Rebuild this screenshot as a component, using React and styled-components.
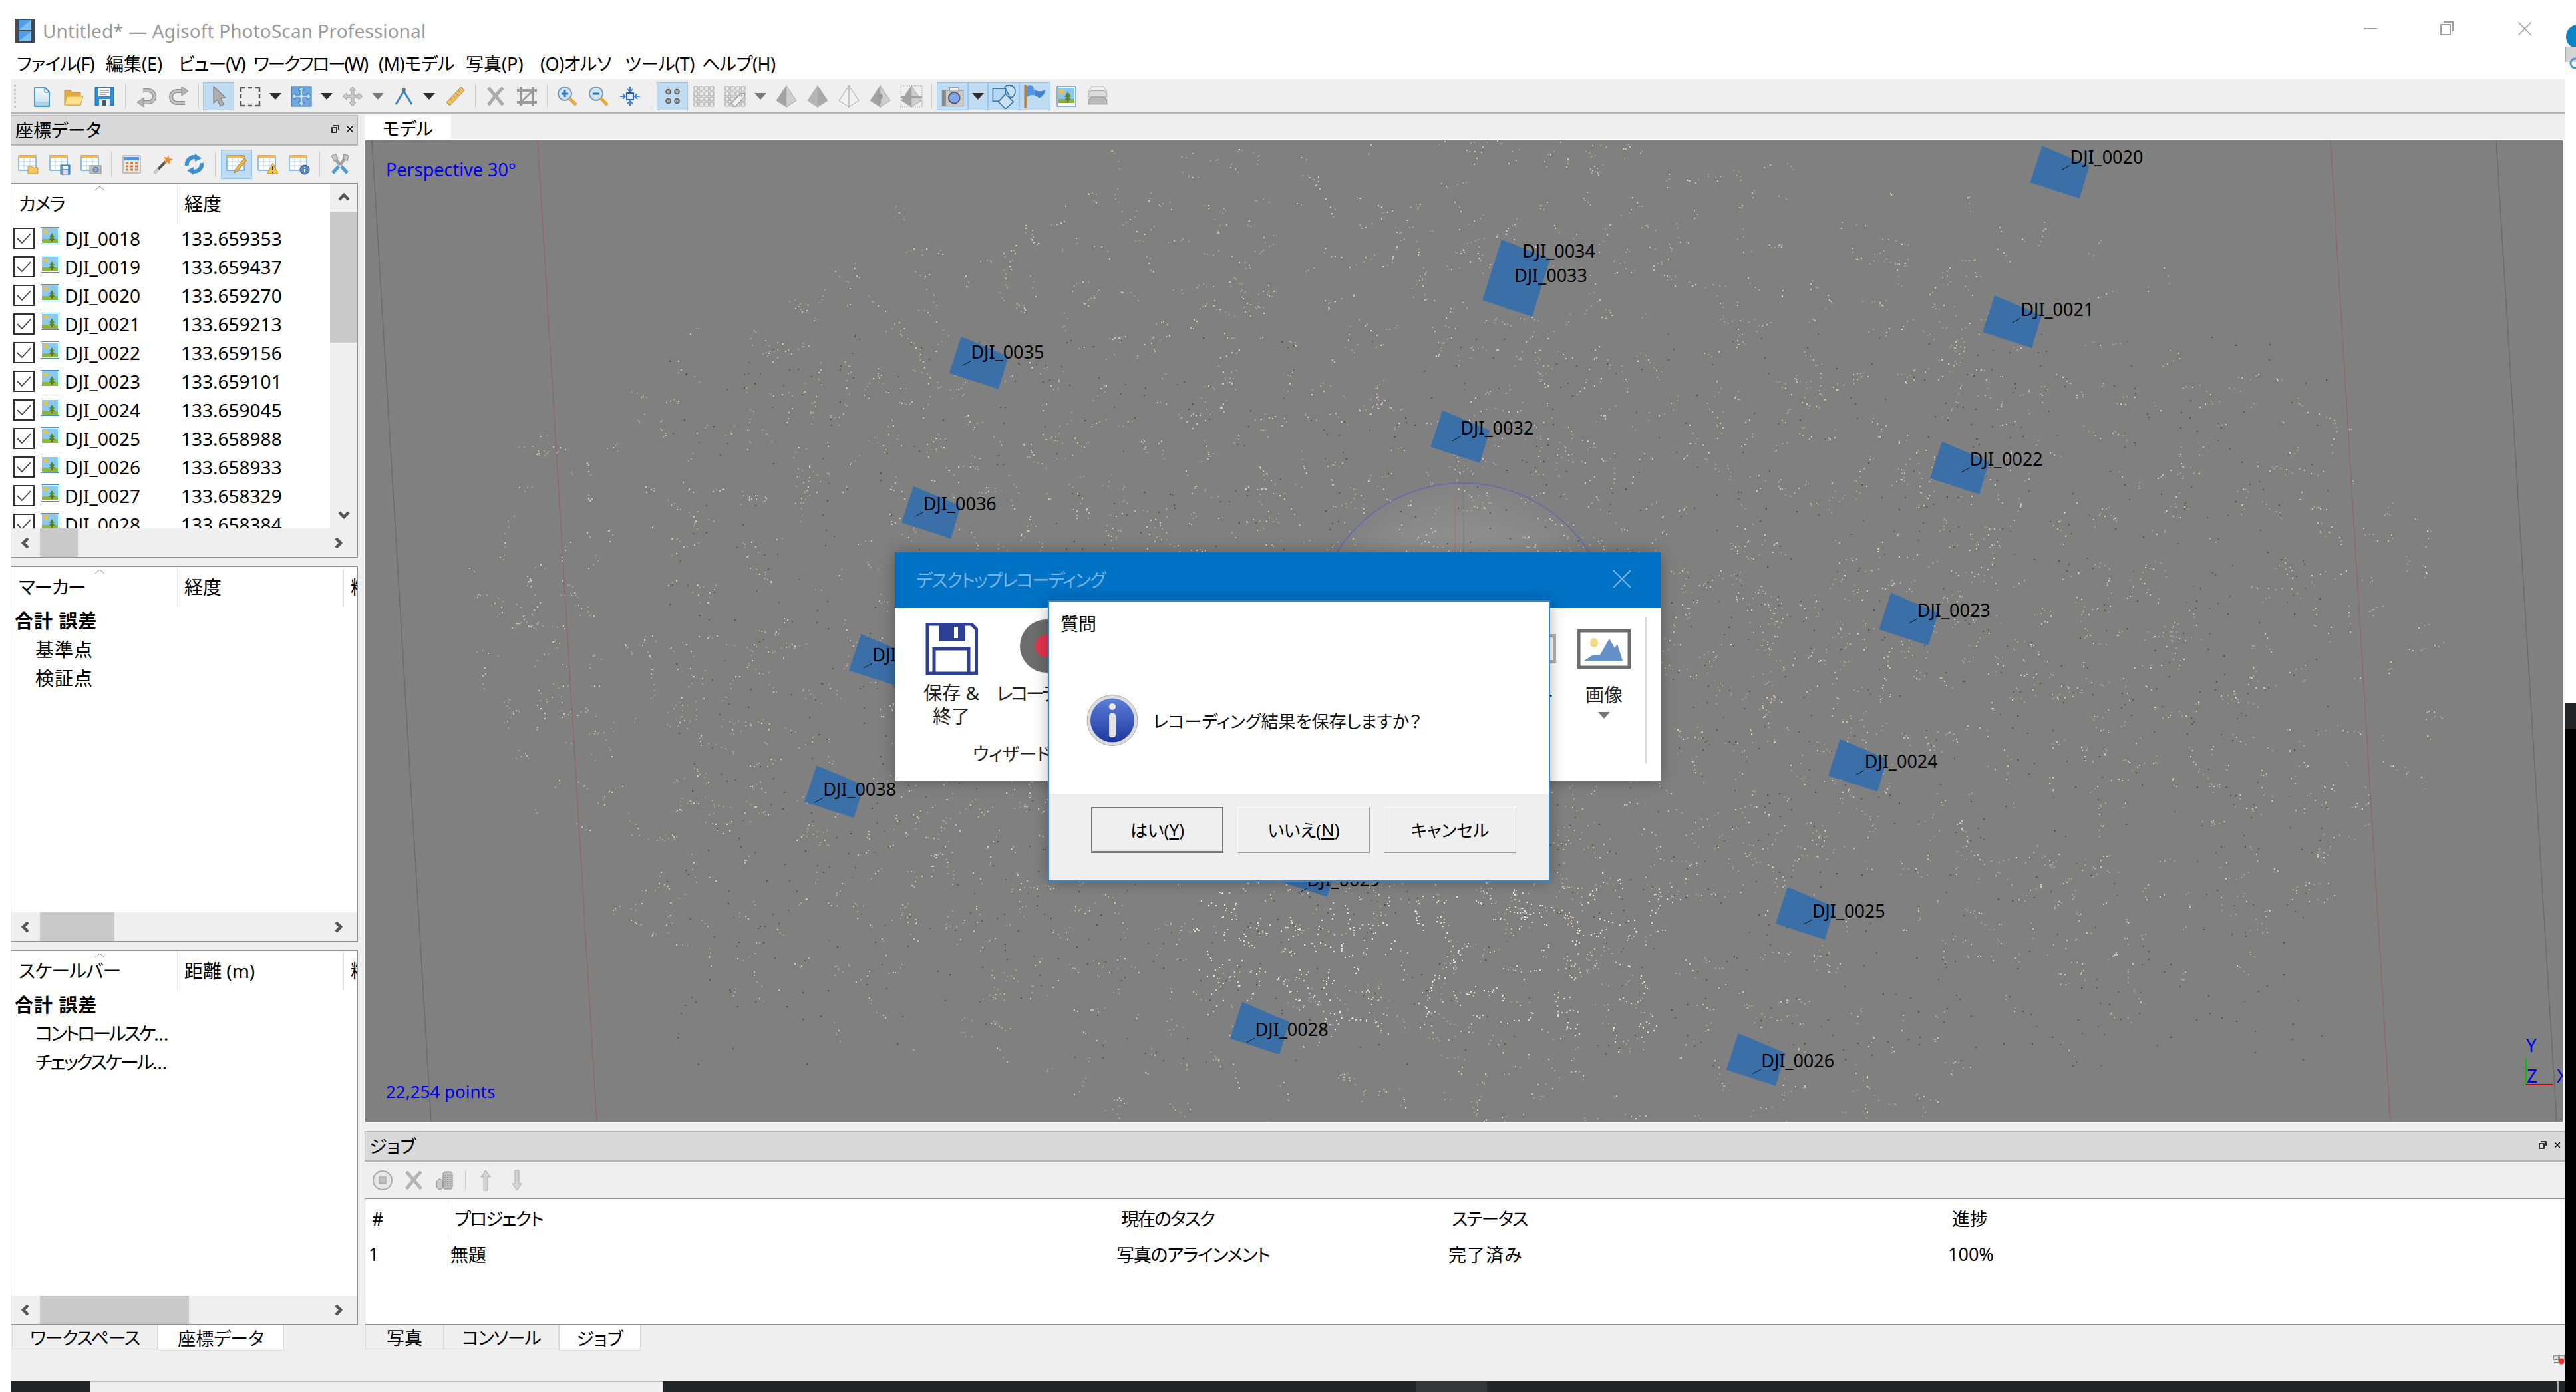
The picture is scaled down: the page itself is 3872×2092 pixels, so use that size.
import React from 'react';
import styled, { createGlobalStyle } from 'styled-components';

const FONT = `"Noto Sans", "Noto Sans CJK JP", sans-serif`;

const GlobalStyle = createGlobalStyle`
  html, body { margin: 0; padding: 0; background: #fff; }
  body { font-family: ${FONT}; font-size: 28px; color: #000; font-feature-settings: "palt"; }
  * { box-sizing: border-box; }
`;

const Page = styled.div`
  position: relative;
  width: 3872px;
  height: 2092px;
  overflow: hidden;
  display: flex;
  background: #fff;
`;
const AppWindow = styled.div`
  margin-left: 16px;
  width: 3840px;
  height: 100%;
  display: flex;
  flex-direction: column;
`;
const RightStrip = styled.div`
  flex: 1;
  display: flex;
  flex-direction: column;
  position: relative;
`;
const StripBand = styled.div`
  margin-top: 1056px;
  height: 40px;
  background: #212527;
`;
const StripBlack = styled.div`
  flex: 1;
  background: #000;
`;
const EdgeCircle = styled.div`
  position: absolute;
  left: 1px;
  top: 37px;
  width: 36px;
  height: 36px;
  border-radius: 50%;
  background: #0a84c6;
`;
const EdgeChip = styled.div`
  position: absolute;
  left: 0;
  top: 70px;
  width: 16px;
  height: 23px;
  background: #d4d4d4;
  border-left: 1px solid #aaa;
  padding: 3px 0 0 5px;
`;

/* title + menu */
const TitleBar = styled.div`
  height: 70px;
  display: flex;
  align-items: center;
  padding: 22px 0 0 6px;
  color: #999;
  font-size: 28px;
`;
const TitleText = styled.span`
  margin-left: 11px;
  white-space: nowrap;
  letter-spacing: 0.1px;
`;
const WinControls = styled.div`
  margin-left: auto;
  margin-top: -6px;
  display: flex;
  width: 303px;
`;
const WinBtn = styled.div`
  width: ${p => p.$w}px;
  height: 22px;
  display: flex;
`;
const MenuBar = styled.div`
  height: 48px;
  display: flex;
  align-items: center;
  padding-left: 9px;
  white-space: nowrap;
`;
const MenuItem = styled.div`
  width: ${p => p.$w}px;
  font-size: 27px;
  letter-spacing: ${p => p.$ls}px;
`;

/* toolbars */
const MainToolbar = styled.div`
  height: 53px;
  display: flex;
  align-items: stretch;
  padding: 3px 0 3px 0;
  background: #efefef;
  border-top: 2px solid #f4f4f4;
  border-bottom: 2px solid #b5b5b5;
`;
const Grip = styled.div`
  width: 18px;
  margin: 4px 0 4px 5px;
  border-left: 3px dotted #c4c4c4;
`;
const ToolBtn = styled.div`
  width: ${p => p.$w || 47}px;
  display: flex;
  align-items: center;
  justify-content: center;
  background: ${p => (p.$active ? '#c0dcf3' : 'transparent')};
  border: 1px solid ${p => (p.$active ? '#90c8f6' : 'transparent')};
`;
const Sep = styled.div`
  width: ${p => p.$w || 14}px;
  display: flex;
  justify-content: center;
  padding: 3px 0;
  &::after {
    content: '';
    width: 1px;
    background: #cfcfcf;
  }
`;
const Arrow = styled.div`
  width: 0;
  height: 0;
  margin-top: ${p => p.$mt || 0}px;
  border-left: 9px solid transparent;
  border-right: 9px solid transparent;
  border-top: 10px solid ${p => p.$c || '#2c2c2c'};
`;

const Main = styled.div`
  flex: 1;
  display: flex;
  background: #efefef;
  position: relative;
  padding-top: 2px;
`;
const LeftCol = styled.div`
  width: 522px;
  display: flex;
  flex-direction: column;
`;
const RightCol = styled.div`
  margin-left: 10px;
  flex: 1;
  min-width: 0;
  display: flex;
  flex-direction: column;
`;
const DockHeader = styled.div`
  height: 46px;
  flex: none;
  display: flex;
  align-items: center;
  justify-content: space-between;
  padding: 0 6px 3px;
  background: #d9d9d9;
  border: 1px solid #b4b4b4;
  border-width: 1px 1px 2px 1px;
  font-size: 27px;
`;
const DockIcons = styled.div`
  display: flex;
  gap: 11px;
  align-items: center;
`;
const PanelToolbar = styled.div`
  height: ${p => p.$h}px;
  flex: none;
  display: flex;
  padding: ${p => p.$pad}px 0 ${p => p.$pb}px 3px;
  align-items: stretch;
`;

/* tables */
const Table = styled.div`
  height: ${p => p.$h}px;
  flex: none;
  margin-bottom: ${p => p.$mb || 0}px;
  display: flex;
  flex-direction: column;
  background: #fff;
  border: 1px solid #8f8f98;
  border-bottom-width: ${p => p.$bb || 1}px;
  overflow: hidden;
`;
const TableBody = styled.div`
  flex: 1;
  min-height: 0;
  display: flex;
`;
const TableMain = styled.div`
  flex: 1;
  min-width: 0;
  overflow: hidden;
`;
const HeadRow = styled.div`
  height: 60px;
  display: flex;
  white-space: nowrap;
`;
const HeadCell = styled.div`
  position: relative;
  width: ${p => p.$w}px;
  flex: none;
  padding-left: ${p => p.$pl || 10}px;
  line-height: 60px;
  border-right: 1px solid #e6e6e6;
  overflow: hidden;
  font-size: 28px;
  letter-spacing: ${p => p.$ls || 0}px;
`;
const SortMark = styled.svg`
  position: absolute;
  left: 125px;
  top: 3px;
`;
const CamRow = styled.div`
  height: 43px;
  display: flex;
  align-items: center;
  padding-left: 3px;
  white-space: nowrap;
`;
const CheckBox = styled.div`
  width: 32px;
  height: 32px;
  flex: none;
  border: 2px solid #333;
  display: flex;
  align-items: center;
  justify-content: center;
`;
const ThumbWrap = styled.div`
  margin: -4px 0 0 9px;
  width: 28px;
  height: 30px;
  flex: none;
`;
const CamName = styled.span`
  margin-left: 8px;
  width: 175px;
`;
const TreeRow = styled.div`
  height: 43px;
  line-height: 43px;
  padding-left: ${p => (p.$sub ? 36 : 5)}px;
  font-weight: ${p => (p.$bold ? 700 : 400)};
  white-space: nowrap;
  font-size: 28px;
  letter-spacing: ${p => p.$ls || 0}px;
`;
const VScroll = styled.div`
  width: 41px;
  flex: none;
  display: flex;
  flex-direction: column;
  background: #efefef;
`;
const ScrollCap = styled.div`
  flex: none;
  width: 41px;
  height: 42px;
  margin-top: ${p => (p.$end ? 'auto' : 0)};
  display: flex;
  align-items: center;
  justify-content: center;
`;
const VThumb = styled.div`
  height: ${p => p.$h}px;
  width: 41px;
  flex: none;
  background: #c9c9c9;
`;
const HScroll = styled.div`
  height: 43px;
  flex: none;
  display: flex;
  background: #efefef;
`;
const HThumb = styled.div`
  width: ${p => p.$w}px;
  background: #c9c9c9;
`;
const HArrowCell = styled.div`
  width: 43px;
  flex: none;
  margin-left: ${p => (p.$end ? 'auto' : 0)};
  margin-right: ${p => p.$mr || 0}px;
  display: flex;
  align-items: center;
  justify-content: center;
`;

/* bottom tabs */
const TabRow = styled.div`
  height: ${p => p.$h || 37}px;
  flex: none;
  display: flex;
  padding-left: ${p => p.$pl || 0}px;
`;
const Tab = styled.div`
  width: ${p => p.$w}px;
  height: ${p => (p.$on ? 38 : 36)}px;
  display: flex;
  align-items: center;
  justify-content: center;
  background: ${p => (p.$on ? '#fff' : '#efefef')};
  border: 1px solid #d8d8d8;
  border-top: 0;
  white-space: nowrap;
  font-size: 27px;
  letter-spacing: ${p => p.$ls || 0}px;
`;
const TopTab = styled.div`
  width: 130px;
  height: 38px;
  display: flex;
  align-items: center;
  justify-content: center;
  background: #fff;
  font-size: 27px;
`;

/* 3D view */
const ViewFrame = styled.div`
  position: relative;
  height: 1475px;
  flex: none;
  margin: 0 4px 0 1px;
  background: #808080;
  overflow: hidden;
  outline: 2px solid #fff;
`;
const ViewSvg = styled.svg`
  display: block;
`;
const ViewLabel = styled.div`
  position: absolute;
  left: 31px;
  color: #0000f0;
  font-size: ${p => p.$fs}px;
  white-space: nowrap;
  top: ${p => p.$top}px;
`;
const JobWrap = styled.div`
  margin-top: 14px;
  display: flex;
  flex-direction: column;
  flex: 1;
`;
const JobHeadRow = styled.div`
  height: 60px;
  display: flex;
  align-items: center;
  white-space: nowrap;
  font-size: 27px;
`;
const JobRow = styled.div`
  height: 44px;
  display: flex;
  align-items: center;
  white-space: nowrap;
  font-size: 27px;
`;
const JobCell = styled.div`
  width: ${p => p.$w}px;
  flex: none;
  padding-left: ${p => p.$pl}px;
  letter-spacing: ${p => p.$ls || 0}px;
`;
const JobHeadCell = styled(JobCell)`
  height: 100%;
  line-height: 60px;
  border-right: ${p => (p.$line ? '1px solid #e6e6e6' : '0')};
`;

/* taskbar */
const TaskBar = styled.div`
  height: 16px;
  flex: none;
  display: flex;
  background: #212527;
`;
const TaskLight = styled.div`
  margin-left: 120px;
  width: 860px;
  background: #efefef;
  border-top: 1px solid #bdbdbd;
`;
const TaskActive = styled.div`
  margin-left: 1132px;
  width: 107px;
  background: #34383a;
`;
const TaskTick = styled.div`
  margin-left: 1608px;
  width: 4px;
  background: #aaa;
`;
const TrayIcon = styled.div`
  position: absolute;
  right: 1px;
  bottom: 16px;
`;

/* dialogs */
const BackDialog = styled.div`
  position: absolute;
  left: 1345px;
  top: 830px;
  width: 1151px;
  height: 344px;
  background: #fff;
  display: flex;
  flex-direction: column;
  box-shadow: 0 0 22px rgba(0, 0, 0, 0.3);
`;
const BackTitle = styled.div`
  height: 83px;
  flex: none;
  display: flex;
  align-items: center;
  justify-content: space-between;
  padding: 0 44px 3px 32px;
  background: #0072c6;
  color: #76b4e4;
  font-size: 27px;
  letter-spacing: -2px;
`;
const Ribbon = styled.div`
  flex: 1;
  display: flex;
  justify-content: space-between;
  padding: 15px 21px 27px 25px;
`;
const RibbonGroup = styled.div`
  display: flex;
  flex-direction: column;
`;
const RibbonItems = styled.div`
  display: flex;
  flex: 1;
  padding-top: 8px;
`;
const RibbonBtn = styled.div`
  width: ${p => p.$w}px;
  margin-right: ${p => p.$mr || 0}px;
  display: flex;
  flex-direction: column;
  align-items: center;
  text-align: center;
  font-size: 28px;
  line-height: 35px;
  white-space: nowrap;
  color: #222;
`;
const RibbonText = styled.div`
  margin-top: ${p => p.$mt || 5}px;
  letter-spacing: ${p => p.$ls || 0}px;
`;
const RecordWrap = styled.div`
  margin-top: -6px;
`;
const RibbonCaption = styled.div`
  padding-left: 92px;
  font-size: 27px;
  line-height: 28px;
  letter-spacing: -0.5px;
  color: #222;
`;
const RibbonRight = styled.div`
  display: flex;
  border-right: 2px solid #d8d8d8;
  padding: 18px 22px 0 0;
`;
const GreyFrame = styled.div`
  width: 78px;
  height: 44px;
  margin: 7px 0 8px;
  border: 5px solid #b4b4b4;
  background: #fff;
`;
const FrontDialog = styled.div`
  position: absolute;
  left: 1575px;
  top: 902px;
  width: 755px;
  height: 423px;
  display: flex;
  flex-direction: column;
  background: #fff;
  border: 2px solid #2a88d8;
  box-shadow: 0 0 22px rgba(0, 0, 0, 0.3);
`;
const DialogBody = styled.div`
  flex: 1;
  display: flex;
  flex-direction: column;
  padding: 14px 17px;
`;
const DialogHeading = styled.div`
  font-size: 27px;
  line-height: 40px;
`;
const DialogMessage = styled.div`
  margin-top: 85px;
  padding-left: 39px;
  display: flex;
  align-items: center;
  gap: 22px;
  font-size: 26px;
  color: #111;
`;
const DialogFooter = styled.div`
  height: 130px;
  flex: none;
  display: flex;
  gap: 21px;
  padding: 20px 49px 0 63px;
  background: #efefef;
`;
const DialogButton = styled.div`
  width: 199px;
  height: 69px;
  display: flex;
  align-items: center;
  justify-content: center;
  background: #efefef;
  border: 1px solid #fff;
  border-right-color: #9a9a9a;
  border-bottom: 2px solid #9a9a9a;
  font-size: 26px;
  ${p => p.$def && `
    border: 2px solid #777;
    border-bottom-width: 3px;
  `}
  u { text-underline-offset: 3px; }
`;

/* icons */
const Ico = ({ s = 32, w, h, children }) => (
  <svg width={w || s} height={h || s} viewBox="0 0 32 32">{children}</svg>
);
const Doc = () => <Ico><defs><linearGradient id="docg" x1="0" x2="0" y1="0" y2="1"><stop offset="0" stopColor="#f4fafd" /><stop offset="1" stopColor="#c4deec" /></linearGradient></defs><path d="M5 3h16l6 6v22H5z" fill="url(#docg)" stroke="#1f7fbf" strokeWidth="1.6" /><rect x="6" y="24" width="20" height="6" fill="#a9cfe2" /><path d="M20 3v7h7z" fill="#fff" stroke="#1f7fbf" strokeWidth="1" /></Ico>;
const Folder = () => <Ico><path d="M3 7h9l2 3h13v19H3z" fill="#e3ad45" stroke="#c08f2c" /><path d="M3 29l4-13h24l-4 13z" fill="#fde28b" stroke="#cfa33c" /></Ico>;
const Floppy = () => <Ico><path d="M2 2h28v28H2z" fill="#2f8fd6" stroke="#1f6aa8" /><rect x="7" y="3" width="18" height="13" fill="#f4f6f8" /><path d="M9 7h14M9 10h14M9 13h10" stroke="#667" strokeWidth="1" /><rect x="8" y="20" width="16" height="10" fill="#e6ecf2" /><rect x="13" y="22" width="6" height="8" fill="#45586a" /></Ico>;
const Undo = () => <Ico><path d="M10 7h8a9 9 0 0 1 0 18H9" fill="none" stroke="#8f8f8f" strokeWidth="6" /><path d="M10 7h8a9 9 0 0 1 0 18H9" fill="none" stroke="#c2c2c2" strokeWidth="3.500" /><path d="M11 18v14L1 25z" fill="#b4b4b4" stroke="#8f8f8f" /></Ico>;
const Redo = () => <Ico><path d="M22 8h-8a9 9 0 0 0 0 18h12" fill="none" stroke="#8f8f8f" strokeWidth="6" /><path d="M22 8h-8a9 9 0 0 0 0 18h12" fill="none" stroke="#c2c2c2" strokeWidth="3.500" /><path d="M21 1v14l10-7z" fill="#b4b4b4" stroke="#8f8f8f" /></Ico>;
const Cursor = () => <Ico><path d="M8 1l18 17-7 1 4 9-5 3-4-10-6 5z" fill="#adadad" stroke="#828282" strokeWidth="1.200" /></Ico>;
const DashRect = () => <Ico><path d="M2 9V3h7M13 3h6M23 3h7v6M30 13v6M30 23v7h-7M19 30h-6M9 30H2v-7M2 19v-6" fill="none" stroke="#555" strokeWidth="2.500" /></Ico>;
const Cross = ({ c = '#aaa', st = '#888' }) => <path d="M16 1l5 6h-3v7h7v-3l6 5-6 5v-3h-7v7h3l-5 6-5-6h3v-7H7v3l-6-5 6-5v3h7V7h-3z" fill={c} stroke={st} strokeWidth="1" />;
const MoveBlue = () => <Ico><rect x="1" y="1" width="30" height="30" fill="#6fa7dd" stroke="#2f6ea8" /><Cross c="#bcdcf4" st="#2f6ea8" /></Ico>;
const MoveGray = () => <Ico><Cross c="#c8c8c8" st="#a0a0a0" /></Ico>;
const Compass = () => <Ico><path d="M4 28L16 8l12 20" fill="none" stroke="#3d86c4" strokeWidth="3" /><circle cx="16" cy="6" r="3" fill="#777" /></Ico>;
const Ruler = () => <Ico><path d="M3 25L25 2l5 5L8 30z" fill="#edc068" stroke="#c08a2c" /><path d="M9 19l3 3M13 15l3 3M17 11l3 3M21 7l3 3" stroke="#a87a28" /></Ico>;
const XMark = ({ c = '#aaa' }) => <Ico><path d="M5 3c6 7 16 18 22 26M27 3C20 9 12 20 5 29" fill="none" stroke={c} strokeWidth="5" /></Ico>;
const Crop = () => <Ico><path d="M7 1v29M25 2v29M1 7h30M1 25h30" stroke="#999" strokeWidth="4" /><path d="M8 24L24 8" stroke="#999" strokeWidth="2.500" /></Ico>;
const Zoom = ({ minus }) => <Ico><circle cx="12" cy="12" r="10" fill="#cfe5f6" stroke="#8a9aa8" strokeWidth="2" /><path d="M19 19l10 10" stroke="#e8a93c" strokeWidth="5" /><path d="M7 12h10" stroke="#2a7ac0" strokeWidth="3" />{!minus && <path d="M12 7v10" stroke="#2a7ac0" strokeWidth="3" />}</Ico>;
const Fit = () => <Ico><rect x="11" y="11" width="10" height="10" fill="#d8e8f6" stroke="#2a5ea8" strokeWidth="2" /><path d="M16 1v8M12 5l4 4 4-4M16 31v-8M12 27l4-4 4 4M1 16h8M5 12l4 4-4 4M31 16h-8M27 12l-4 4 4 4" fill="none" stroke="#3d7fd0" strokeWidth="2" /></Ico>;
const Dots = () => <Ico>{[9.500, 22.500].map(x => [9, 23].map(y => <circle key={x + '-' + y} cx={x} cy={y} r="3.500" fill="#a4a4a4" stroke="#555" strokeWidth="1.500" />))}</Ico>;
const gridPos = [4, 12, 20, 28];
const SmallGrid = () => gridPos.map(x => gridPos.map(y => <rect key={x + '-' + y} x={x - 3} y={y - 3} width="6" height="6" rx="0.500" fill="#e8e8e8" stroke="#a8a8a8" strokeWidth="1.200" />));
const Grid = () => <Ico><SmallGrid /></Ico>;
const TagGrid = () => <Ico><SmallGrid /><path d="M10 27l14-15 6-1 0 6-14 15z" fill="#efefef" stroke="#a0a0a0" strokeWidth="1.400" /><circle cx="26" cy="15" r="1.500" fill="#a0a0a0" /></Ico>;
const Pyr = ({ v = 0 }) => (
  <Ico s={34}>
    <path d="M16 1L2 22l14 9z" fill={v === 2 ? '#f2f2f2' : v === 1 ? '#b6b6b6' : '#a2a2a2'} stroke="#b0b0b0" />
    <path d="M16 1l14 21-14 9z" fill={v === 2 ? '#f2f2f2' : v === 1 ? '#a8a8a8' : '#cfcfcf'} stroke="#b0b0b0" />
    {v === 3 && <path d="M16 12c4 0 5 7 1 8v6h-2v-6c-4-1-3-8 1-8z" fill="#9a9a9a" />}
    {v === 4 && <><rect x="1" y="1" width="30" height="30" fill="none" stroke="#888" strokeDasharray="1 2" /><path d="M1 17h30" stroke="#a0a0a0" strokeWidth="3" /></>}
  </Ico>
);
const Camera = () => <Ico s={36}><rect x="2" y="8" width="28" height="21" fill="#c8c8c8" stroke="#888" /><rect x="2" y="8" width="5" height="21" fill="#8a8a8a" /><rect x="12" y="4" width="12" height="5" fill="#eee" stroke="#999" /><circle cx="18" cy="18" r="7.500" fill="#7ea6ee" stroke="#555" strokeWidth="1.500" /></Ico>;
const Shapes = () => <Ico s={38}><path d="M17 4a8 8 0 0 1 12 1c3 6 0 12-5 13z" fill="#c9e2f5" stroke="#2a6ea8" strokeWidth="1.300" /><rect x="2" y="6" width="16" height="16" fill="#b8d6f0" stroke="#2a6ea8" strokeWidth="1.300" /><path d="M18 13l10 10-10 9-9-9z" fill="#c9e2f5" stroke="#2a6ea8" strokeWidth="1.300" /></Ico>;
const Flag = () => <Ico s={38}><rect x="2" y="1" width="3" height="30" fill="#b9803c" /><path d="M5 3c5-2 8-1 9 2l2 10c-3-1-7-1-11 2z" fill="#4e94e0" /><path d="M15 8c5 2 9 2 14 0-1 5-4 9-8 10l-5-3z" fill="#4283d0" /></Ico>;
const Picture = () => <Ico><rect x="2" y="1" width="28" height="30" fill="#fff" stroke="#2a6ea8" strokeWidth="1" /><rect x="4" y="3" width="24" height="18" fill="#8ac6ee" /><rect x="4" y="20" width="24" height="6" fill="#86b03c" /><circle cx="9" cy="9" r="3.500" fill="#f6c22e" /><path d="M18 9l5 8h-3l3 5h-10l3-5h-3z" fill="#5a8a2c" /><rect x="17" y="20" width="2" height="5" fill="#8a5a2c" /></Ico>;
const Layers = () => <Ico s={34}><path d="M8 2h16l5 7H3z" fill="#f2f2f2" stroke="#bbb" /><path d="M3 12l4-4h18l4 4v5H3z" fill="#ddd" stroke="#aaa" /><path d="M3 21l4-4h18l4 4v6H3z" fill="#bbb" stroke="#999" /></Ico>;

const TableGlyph = () => <g><rect x="1" y="3" width="26" height="22" fill="#fff" stroke="#2a86c8" /><rect x="1" y="3" width="26" height="4" fill="#edb95c" /><path d="M9 7v18M18 7v18M1 12h26M1 18h26" stroke="#a8cce6" strokeWidth="1" /></g>;
const TFolder = () => <Ico><TableGlyph /><path d="M15 19h6l2 2h7v9H15z" fill="#f2c766" stroke="#c99a2e" /></Ico>;
const TFloppy = () => <Ico><TableGlyph /><rect x="17" y="17" width="14" height="14" fill="#5a9ad0" stroke="#2a6ea8" /><rect x="20" y="18" width="8" height="5" fill="#fff" /><rect x="20" y="25" width="8" height="6" fill="#dde" /></Ico>;
const TCamera = () => <Ico><TableGlyph /><rect x="14" y="18" width="17" height="12" fill="#bbb" stroke="#888" /><circle cx="23" cy="24" r="4" fill="#7ea6ee" stroke="#666" /></Ico>;
const TPencil = () => <Ico><TableGlyph /><path d="M12 29l2-6L27 7l4 3-14 16z" fill="#efb64e" stroke="#b07a20" /></Ico>;
const TWarn = () => <Ico><TableGlyph /><path d="M23 14l8 16H15z" fill="#fbc93e" stroke="#b88a18" /><path d="M23 19v6M23 27v2" stroke="#333" strokeWidth="2" /></Ico>;
const TInfo = () => <Ico><TableGlyph /><circle cx="24" cy="24" r="7" fill="#5b86c8" stroke="#2a4e90" /><path d="M24 20v1M24 23v5" stroke="#fff" strokeWidth="2" /></Ico>;
const Calc = () => <Ico><rect x="3" y="3" width="26" height="26" fill="#e8e8e8" stroke="#999" /><rect x="5" y="5" width="22" height="5" fill="#5a8fd6" /><path d="M7 14h4M14 14h4M21 14h4M7 19h4M14 19h4M21 19h4M7 24h4M14 24h4M21 24h4" stroke="#d97a30" strokeWidth="3" /></Ico>;
const Wand = () => <Ico><path d="M3 29L20 12" stroke="#555" strokeWidth="4" /><path d="M3 29l6-6" stroke="#ccc" strokeWidth="4" /><path d="M24 1l1 6 6 1-5 3 1 6-4-4-5 2 2-6-3-4 6 1z" fill="#f08a20" /></Ico>;
const Refresh = () => <Ico><path d="M5 18a11 11 0 0 1 15-12" fill="none" stroke="#3d8fd0" strokeWidth="6" /><path d="M27 14a11 11 0 0 1-15 12" fill="none" stroke="#3d8fd0" strokeWidth="6" /><path d="M17 0l10 7-10 5zM15 32L5 25l10-5z" fill="#3d8fd0" /></Ico>;
const Tools = () => <Ico><path d="M16 17l9-12M16 17L7 5" stroke="#a4a4a4" strokeWidth="5" /><path d="M3 3l7-2 3 6-6 4zM22 1l7 2-2 8-6-4z" fill="#c8c8c8" stroke="#8a8a8a" /><path d="M5 29l9-10M27 29l-9-10" stroke="#4a98d8" strokeWidth="5" /></Ico>;
const Thumb = () => <svg width="28" height="30" viewBox="0 0 28 30"><rect x="0.500" y="0.500" width="27" height="25" fill="#fff" stroke="#4a90c8" /><rect x="2" y="2" width="24" height="17" fill="#8ccaf0" /><rect x="2" y="18" width="24" height="6" fill="#8ab83c" /><circle cx="8" cy="7" r="3" fill="#f6c22e" /><path d="M17 9l4 6h-2.500l3 4h-9l3-4H13z" fill="#4a8a2c" /><rect x="16" y="18" width="2" height="4" fill="#8a5a2c" /></svg>;
const Tick = () => <svg width="24" height="20" viewBox="0 0 24 20"><path d="M2 10l7 7L22 3" fill="none" stroke="#444" strokeWidth="1.800" /></svg>;
const Chevron = ({ dir, c = '#555', s = 18 }) => {
  const d = { up: 'M2 12L9 5l7 7', down: 'M2 6l7 7 7-7', left: 'M12 2L5 9l7 7', right: 'M6 2l7 7-7 7' }[dir];
  return <svg width={s} height={s} viewBox="0 0 18 18"><path d={d} fill="none" stroke={c} strokeWidth="4.500" /></svg>;
};
const Sort = () => <SortMark width="16" height="8" viewBox="0 0 16 8"><path d="M1 7l7-6 7 6" fill="none" stroke="#888" strokeWidth="1" /></SortMark>;
const DockFloat = () => <svg width="12" height="12" viewBox="0 0 12 12"><path d="M3 1h8v6M1 4h7v7H1z" fill="none" stroke="#000" strokeWidth="1.600" /></svg>;
const DockClose = () => <svg width="10" height="10" viewBox="0 0 10 10"><path d="M1 1l8 8M9 1l-8 8" stroke="#000" strokeWidth="1.600" /></svg>;
const LogoFilm = () => <svg width="31" height="36" viewBox="0 0 31 36"><rect width="31" height="36" rx="1" fill="#4a4a4a" /><rect x="6" y="2" width="19" height="15" fill="#4e9fe8" /><rect x="6" y="19" width="19" height="15" fill="#4e9fe8" /><path d="M6 17L25 2v15zM6 34l19-15v15z" fill="#7cc0f4" /></svg>;
const InfoIcon = () => <svg width="78" height="79" viewBox="0 0 78 79"><defs><linearGradient id="ib" x1="0" x2="0" y1="0" y2="1"><stop offset="0" stopColor="#5a7fd8" /><stop offset="1" stopColor="#2038a0" /></linearGradient></defs><circle cx="39" cy="39.500" r="38" fill="#ddd" stroke="#aaa" /><circle cx="39" cy="39.500" r="33" fill="url(#ib)" /><circle cx="39" cy="19" r="5" fill="#eee" /><rect x="34" y="29" width="10" height="36" rx="4" fill="#e4e4e4" /></svg>;
const SaveLarge = () => <svg width="80" height="80" viewBox="0 0 80 80"><path d="M4 2h66l8 8v66H4z" fill="#fff" stroke="#2e3f96" strokeWidth="5" /><rect x="21" y="3" width="40" height="25" fill="#2e3f96" /><rect x="44" y="6" width="6" height="17" fill="#fff" /><path d="M14 74V39h52v35" fill="none" stroke="#2e3f96" strokeWidth="5" /></svg>;
const RecordLarge = () => <svg width="82" height="82" viewBox="0 0 82 82"><circle cx="41" cy="41" r="40" fill="#6d6d6d" /><circle cx="41" cy="41" r="17" fill="#e8344e" /></svg>;
const ImageLarge = () => <svg width="80" height="59" viewBox="0 0 80 59"><rect x="2" y="2" width="76" height="55" fill="#fff" stroke="#6d6d6d" strokeWidth="5" /><ellipse cx="25" cy="20" rx="6" ry="7" fill="#f0dc80" /><path d="M10 47l14-9 10 0 14-24 8 14 4-6 8 25z" fill="#6690c8" /></svg>;
const Tray = () => <svg width="17" height="15" viewBox="0 0 17 15"><rect x="0.500" y="0.500" width="7" height="6" fill="#ddd" stroke="#888" /><rect x="9.500" y="0.500" width="7" height="6" fill="#ddd" stroke="#888" /><path d="M1 11h8" stroke="#777" strokeWidth="2" /><circle cx="12" cy="9" r="4.500" fill="#e8342a" /></svg>;
const StopIco = () => <Ico><circle cx="16" cy="16" r="14" fill="#e6e6e6" stroke="#aaa" strokeWidth="2" /><rect x="11" y="11" width="10" height="10" fill="#c0c0c0" stroke="#999" /></Ico>;
const Drum = () => <Ico><ellipse cx="8" cy="22" rx="5" ry="8" fill="#ccc" stroke="#888" /><rect x="13" y="3" width="14" height="26" rx="3" fill="#bdbdbd" stroke="#888" /><path d="M16 8v18M20 8v18M24 8v18" stroke="#999" strokeDasharray="1 2" strokeWidth="2" /></Ico>;
const UpDown = ({ down }) => <Ico><g transform={down ? 'rotate(180 16 16)' : 'rotate(0)'}><path d="M16 1l7 10h-4v20h-6V11H9z" fill="#d4d4d4" stroke="#aaa" /></g></Ico>;

/* viewport drawing */
const S = 3872 / 1568;
const CAMS = [
  ['DJI_0020', 1254, 105, 1260, 95],
  ['DJI_0021', 1225, 196, 1230, 188],
  ['DJI_0022', 1193, 285, 1199, 279],
  ['DJI_0023', 1162, 377, 1167, 371],
  ['DJI_0024', 1131, 466, 1135, 463],
  ['DJI_0025', 1099, 556, 1103, 554],
  ['DJI_0026', 1069, 645, 1072, 645],
  ['DJI_0028', 767, 626, 764, 626],
  ['DJI_0029', 796, 530, 795.5, 535],
  ['DJI_0032', 889, 266, 889, 260],
  ['DJI_0035', 596, 221, 591, 214],
  ['DJI_0036', 567, 312, 562, 306],
  ['DJI_0037', 535, 402, 531, 398],
  ['DJI_0038', 508, 482, 501, 480],
];
const VX = 549;
const VY = 210;

// scattered sparse cloud, short runs of dots rather than long strings
function makePoints() {
  let seed = 12345;
  const rnd = () => {
    seed = (seed * 1664525 + 1013904223) % 4294967296;
    return seed / 4294967296;
  };
  let light = '';
  let dim = '';
  let dark = '';
  let bright = '';
  const dot = (x, y, s) => `M${Math.round(x)} ${Math.round(y)}h${s}v${s}h-${s}z`;
  const run = (cx, cy, n, b) => {
    const a = rnd() * 6.28;
    let x = cx;
    let y = cy;
    for (let i = 0; i < n; i++) {
      x += Math.cos(a) * (2 + rnd() * 8) + (rnd() - 0.5) * 12;
      y += Math.sin(a) * (2 + rnd() * 8) + (rnd() - 0.5) * 12;
      const s = dot(x, y, 2);
      if (b) bright += s;
      else if (rnd() < 0.6) dim += s;
      else light += s;
    }
  };
  for (let i = 0; i < 4200; i++) {
    const x = 2197 + (rnd() * 2 - 1) * 1500;
    const y = 960 + (rnd() * 2 - 1) * 770;
    const d = ((x - 2197) / 1500) ** 2 + ((y - 960) / 770) ** 2;
    if (d > 1 || rnd() < d * 0.6) continue;
    run(x, y, 2 + Math.floor(rnd() * 4), false);
  }
  for (let i = 0; i < 130; i++) {
    run(1800 + rnd() * 700, 1340 + rnd() * 200, 4, true);
  }
  for (let i = 0; i < 1400; i++) {
    const x = 1000 + rnd() * 2500;
    const y = 500 + rnd() * 1100;
    dark += dot(x, y, 2);
  }
  return { light, dim, dark, bright };
}
const POINTS = makePoints();

const Viewport = () => (
  <ViewSvg width="3303" height="1475" viewBox="0 0 3303 1475">
    <defs>
      <radialGradient id="sphere" cx="0.5" cy="0.5" r="0.5">
        <stop offset="0.4" stopColor="#979797" />
        <stop offset="1" stopColor="#828282" />
      </radialGradient>
    </defs>
    <g transform={`translate(${-VX} ${-VY})`}>
      <path d="M808 210L897 1684M3503 210L3593 1684" stroke="#8c6868" strokeWidth="1.500" fill="none" />
      <path d="M559 210L648 1684M3752 210L3843 1684" stroke="#6a6a6a" strokeWidth="1.500" fill="none" />
      <circle cx="2199" cy="950" r="225" fill="url(#sphere)" stroke="#6a66a8" strokeWidth="1.500" />
      <path d="M2187 735V830" stroke="#9a7a7a" strokeWidth="1.500" />
      <path d="M2200 725V830" stroke="#777" strokeWidth="1" />
      <path d={POINTS.dark} fill="#4e5a48" />
      <path d={POINTS.dim} fill="#a8a598" />
      <path d={POINTS.light} fill="#cfcab8" />
      <path d={POINTS.bright} fill="#e4e2d4" />
      {CAMS.map(([n, qx, qy]) => {
        const x = qx * S;
        const y = qy * S;
        return <polygon key={n} points={`${x - 27},${y - 41} ${x + 44},${y - 11} ${x + 29},${y + 38} ${x - 45},${y + 14}`} fill="#3b6fa8" />;
      })}
      <polygon points="2257,359 2330,388 2303,475 2228,450" fill="#3b6fa8" />
      {CAMS.map(([n, , , lx, ly]) => (
        <g key={n}>
          <path d={`M${lx * S} ${ly * S + 13}l-13 7`} stroke="#111" strokeWidth="1" />
          <text x={lx * S} y={ly * S + 10} fontSize="27" fill="#000">{n}</text>
        </g>
      ))}
      <text x="2288" y="386" fontSize="27" fill="#000">DJI_0034</text>
      <text x="2276" y="423" fontSize="27" fill="#000">DJI_0033</text>
      <path d="M3797 1589V1629" stroke="#00c000" strokeWidth="2" />
      <path d="M3797 1629H3837" stroke="#c00000" strokeWidth="2" />
      <text x="3797" y="1580" fontSize="28" fill="#0000f0">Y</text>
      <text x="3798" y="1626" fontSize="28" fill="#0000f0">Z</text>
      <text x="3843" y="1626" fontSize="28" fill="#0000f0">X</text>
    </g>
  </ViewSvg>
);

const MENUS = [
  ['ファイル(F)', 134, -1], ['編集(E)', 109, 0], ['ビュー(V)', 113, -1], ['ワークフロー(W)', 188, -2.3], ['(M)モデル', 131, -0.5],
  ['写真(P)', 112, 0], ['(O)オルソ', 127, -0.5], ['ツール(T)', 116, -0.5], ['ヘルプ(H)', 110, -0.5],
];
const CAMERA_ROWS = [
  ['DJI_0018', '133.659353'], ['DJI_0019', '133.659437'], ['DJI_0020', '133.659270'],
  ['DJI_0021', '133.659213'], ['DJI_0022', '133.659156'], ['DJI_0023', '133.659101'],
  ['DJI_0024', '133.659045'], ['DJI_0025', '133.658988'], ['DJI_0026', '133.658933'],
  ['DJI_0027', '133.658329'], ['DJI_0028', '133.658384'],
];
const Dd = ({ c }) => <ToolBtn $w={30}><Arrow $c={c} /></ToolBtn>;

const TableHead = ({ first, second, third, ls }) => (
  <HeadRow>
    <HeadCell $w={250} $pl={11} $ls={ls}><Sort />{first}</HeadCell>
    <HeadCell $w={250}>{second}</HeadCell>
    {third && <HeadCell $w={60}>{third}</HeadCell>}
  </HeadRow>
);

const Bar = ({ w }) => (
  <HScroll>
    <HArrowCell><Chevron dir="left" /></HArrowCell>
    <HThumb $w={w} />
    <HArrowCell $end $mr={8}><Chevron dir="right" /></HArrowCell>
  </HScroll>
);

export default function App() {
  return (
    <Page>
      <GlobalStyle />
      <AppWindow>
        <TitleBar>
          <LogoFilm />
          <TitleText>Untitled* — Agisoft PhotoScan Professional</TitleText>
          <WinControls>
            <WinBtn $w={115}><svg width="20" height="22" viewBox="0 0 20 22"><path d="M0 11h20" stroke="#a0a0a0" strokeWidth="2" /></svg></WinBtn>
            <WinBtn $w={117}><svg width="20" height="22" viewBox="0 0 20 22"><path d="M5 1h14v14M1 5h14v15H1z" fill="none" stroke="#a0a0a0" strokeWidth="2" /></svg></WinBtn>
            <WinBtn $w={71}><svg width="20" height="22" viewBox="0 0 20 22"><path d="M0 1l20 20M20 1L0 21" stroke="#a0a0a0" strokeWidth="1.500" /></svg></WinBtn>
          </WinControls>
        </TitleBar>
        <MenuBar>
          {MENUS.map(([t, w, ls]) => <MenuItem key={t} $w={w} $ls={ls}>{t}</MenuItem>)}
        </MenuBar>
        <MainToolbar>
          <Grip />
          <ToolBtn><Doc /></ToolBtn>
          <ToolBtn><Folder /></ToolBtn>
          <ToolBtn><Floppy /></ToolBtn>
          <Sep $w={17} />
          <ToolBtn><Undo /></ToolBtn>
          <ToolBtn><Redo /></ToolBtn>
          <Sep />
          <ToolBtn $active><Cursor /></ToolBtn>
          <ToolBtn><DashRect /></ToolBtn>
          <Dd />
          <ToolBtn><MoveBlue /></ToolBtn>
          <Dd />
          <ToolBtn><MoveGray /></ToolBtn>
          <Dd c="#777" />
          <ToolBtn><Compass /></ToolBtn>
          <Dd />
          <ToolBtn><Ruler /></ToolBtn>
          <Sep />
          <ToolBtn><XMark /></ToolBtn>
          <ToolBtn><Crop /></ToolBtn>
          <Sep />
          <ToolBtn><Zoom /></ToolBtn>
          <ToolBtn><Zoom minus /></ToolBtn>
          <ToolBtn><Fit /></ToolBtn>
          <Sep $w={17} />
          <ToolBtn $active><Dots /></ToolBtn>
          <ToolBtn><Grid /></ToolBtn>
          <ToolBtn><TagGrid /></ToolBtn>
          <Dd c="#777" />
          <ToolBtn><Pyr v={0} /></ToolBtn>
          <ToolBtn><Pyr v={1} /></ToolBtn>
          <ToolBtn><Pyr v={2} /></ToolBtn>
          <ToolBtn><Pyr v={3} /></ToolBtn>
          <ToolBtn><Pyr v={4} /></ToolBtn>
          <Sep $w={15} />
          <ToolBtn $active><Camera /></ToolBtn>
          <ToolBtn $active $w={30}><Arrow /></ToolBtn>
          <ToolBtn $active><Shapes /></ToolBtn>
          <ToolBtn $active><Flag /></ToolBtn>
          <ToolBtn><Picture /></ToolBtn>
          <ToolBtn><Layers /></ToolBtn>
        </MainToolbar>
        <Main>
          <LeftCol>
            <DockHeader>
              座標データ
              <DockIcons><DockFloat /><DockClose /></DockIcons>
            </DockHeader>
            <PanelToolbar $h={56} $pad={6} $pb={6}>
              <ToolBtn><TFolder /></ToolBtn>
              <ToolBtn><TFloppy /></ToolBtn>
              <ToolBtn><TCamera /></ToolBtn>
              <Sep />
              <ToolBtn><Calc /></ToolBtn>
              <ToolBtn><Wand /></ToolBtn>
              <ToolBtn><Refresh /></ToolBtn>
              <Sep $w={17} />
              <ToolBtn $active><TPencil /></ToolBtn>
              <ToolBtn><TWarn /></ToolBtn>
              <ToolBtn><TInfo /></ToolBtn>
              <Sep $w={14} />
              <ToolBtn><Tools /></ToolBtn>
            </PanelToolbar>
            <Table $h={563} $mb={13}>
              <TableBody>
                <TableMain>
                  <TableHead first="カメラ" second="経度" ls={-2} />
                  {CAMERA_ROWS.map(([n, v]) => (
                    <CamRow key={n}>
                      <CheckBox><Tick /></CheckBox>
                      <ThumbWrap><Thumb /></ThumbWrap>
                      <CamName>{n}</CamName>
                      <span>{v}</span>
                    </CamRow>
                  ))}
                </TableMain>
                <VScroll>
                  <ScrollCap><Chevron dir="up" /></ScrollCap>
                  <VThumb $h={197} />
                  <ScrollCap $end><Chevron dir="down" /></ScrollCap>
                </VScroll>
              </TableBody>
              <Bar w={57} />
            </Table>
            <Table $h={564} $mb={13}>
              <TableMain>
                <TableHead first="マーカー" second="経度" third="精度" ls={-1.5} />
                <TreeRow $bold $ls={1}>合計 誤差</TreeRow>
                <TreeRow $sub $ls={1}>基準点</TreeRow>
                <TreeRow $sub $ls={1}>検証点</TreeRow>
              </TableMain>
              <Bar w={112} />
            </Table>
            <Table $h={564} $bb={2}>
              <TableMain>
                <TableHead first="スケールバー" second="距離 (m)" third="精度" ls={-1} />
                <TreeRow $bold $ls={1}>合計 誤差</TreeRow>
                <TreeRow $sub $ls={-3.4}>コントロールスケ…</TreeRow>
                <TreeRow $sub $ls={-3}>チェックスケール…</TreeRow>
              </TableMain>
              <Bar w={224} />
            </Table>
            <TabRow $pl={2}>
              <Tab $w={219} $ls={-1.2}>ワークスペース</Tab>
              <Tab $w={190} $on>座標データ</Tab>
            </TabRow>
          </LeftCol>
          <RightCol>
            <TabRow $h={38}>
              <TopTab>モデル</TopTab>
            </TabRow>
            <ViewFrame>
              <Viewport />
              <ViewLabel $top={25} $fs={27}>Perspective 30°</ViewLabel>
              <ViewLabel $top={1411} $fs={26}>22,254 points</ViewLabel>
            </ViewFrame>
            <JobWrap>
              <DockHeader>
                ジョブ
                <DockIcons><DockFloat /><DockClose /></DockIcons>
              </DockHeader>
              <PanelToolbar $h={55} $pad={9} $pb={8}>
                <ToolBtn><StopIco /></ToolBtn>
                <ToolBtn><XMark c="#b4b4b4" /></ToolBtn>
                <ToolBtn><Drum /></ToolBtn>
                <Sep $w={14} />
                <ToolBtn><UpDown /></ToolBtn>
                <ToolBtn><UpDown down /></ToolBtn>
              </PanelToolbar>
              <Table $h={191} $bb={2}>
                <JobHeadRow>
                  <JobHeadCell $w={125} $pl={10} $line>#</JobHeadCell>
                  <JobHeadCell $w={1001} $pl={9} $ls={-2}>プロジェクト</JobHeadCell>
                  <JobHeadCell $w={497} $pl={10} $ls={-2}>現在のタスク</JobHeadCell>
                  <JobHeadCell $w={752} $pl={10} $ls={-2}>ステータス</JobHeadCell>
                  <JobHeadCell $w={300} $pl={10}>進捗</JobHeadCell>
                </JobHeadRow>
                <JobRow>
                  <JobCell $w={125} $pl={5}>1</JobCell>
                  <JobCell $w={1001} $pl={3}>無題</JobCell>
                  <JobCell $w={497} $pl={3} $ls={-1.3}>写真のアラインメント</JobCell>
                  <JobCell $w={752} $pl={5} $ls={1}>完了済み</JobCell>
                  <JobCell $w={300} $pl={4}>100%</JobCell>
                </JobRow>
              </Table>
              <TabRow $pl={1}>
                <Tab $w={118}>写真</Tab>
                <Tab $w={173} $ls={-1}>コンソール</Tab>
                <Tab $w={123} $on>ジョブ</Tab>
              </TabRow>
            </JobWrap>
          </RightCol>
          <TrayIcon><Tray /></TrayIcon>
        </Main>
        <TaskBar>
          <TaskLight />
          <TaskActive />
          <TaskTick />
        </TaskBar>
      </AppWindow>
      <RightStrip>
        <EdgeCircle />
        <EdgeChip><svg width="11" height="17" viewBox="0 0 11 17"><circle cx="9" cy="9" r="7" fill="none" stroke="#3d9ad8" strokeWidth="3" /></svg></EdgeChip>
        <StripBand />
        <StripBlack />
      </RightStrip>

      <BackDialog>
        <BackTitle>
          デスクトップレコーディング
          <svg width="28" height="28" viewBox="0 0 28 28"><path d="M1 1l26 26M27 1L1 27" stroke="#76b4e4" strokeWidth="2" /></svg>
        </BackTitle>
        <Ribbon>
          <RibbonGroup>
            <RibbonItems>
              <RibbonBtn $w={120}>
                <SaveLarge />
                <RibbonText $mt={8}>保存 &amp;<br />終了</RibbonText>
              </RibbonBtn>
              <RibbonBtn $w={166}>
                <RecordWrap><RecordLarge /></RecordWrap>
                <RibbonText $mt={6} $ls={-3.5}>レコーディング</RibbonText>
              </RibbonBtn>
            </RibbonItems>
            <RibbonCaption>ウィザード</RibbonCaption>
          </RibbonGroup>
          <RibbonRight>
            <RibbonBtn $w={80} $mr={31}>
              <GreyFrame />
              <RibbonText $mt={22}>カット</RibbonText>
            </RibbonBtn>
            <RibbonBtn $w={80}>
              <ImageLarge />
              <RibbonText $mt={22}>画像</RibbonText>
              <Arrow $c="#777" $mt={8} />
            </RibbonBtn>
          </RibbonRight>
        </Ribbon>
      </BackDialog>
      <FrontDialog>
        <DialogBody>
          <DialogHeading>質問</DialogHeading>
          <DialogMessage>
            <InfoIcon />
            レコーディング結果を保存しますか？
          </DialogMessage>
        </DialogBody>
        <DialogFooter>
          <DialogButton $def>はい(<u>Y</u>)</DialogButton>
          <DialogButton>いいえ(<u>N</u>)</DialogButton>
          <DialogButton>キャンセル</DialogButton>
        </DialogFooter>
      </FrontDialog>
    </Page>
  );
}
